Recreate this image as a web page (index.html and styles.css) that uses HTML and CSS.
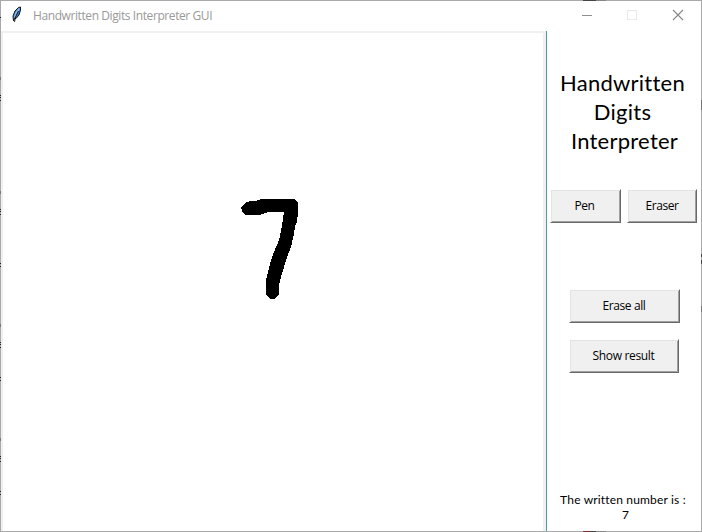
FILE: index.html
```html
<!DOCTYPE html>
<html lang="en">
<head>
<meta charset="utf-8">
<title>Handwritten Digits Interpreter GUI</title>
<link rel="stylesheet" href="styles.css">
</head>
<body>
<div class="window">
  <header class="titlebar">
    <svg class="feather" width="12" height="18" viewBox="0 0 12 18"><path d="M2.5 15L2 10L4 5L7.5 1.5L9.5 1L9.5 4L8 9L5 12.5L3.5 12.5Z" fill="#3d78b8" stroke="#111820" stroke-width="1"/><path d="M8.5 2.5L5 7L3.500 11.500" fill="none" stroke="#83bdf0" stroke-width="1.6"/><path d="M7.500 5L4.500 11L3.500 16" fill="none" stroke="#101010" stroke-width=".9"/></svg>
    <span class="caption">Handwritten Digits Interpreter GUI</span>
    <svg class="controls" width="102" height="12" viewBox="0 0 102 12" fill="none" shape-rendering="crispEdges"><path d="M0 6.5H10" stroke="#8f8f8f"/><path d="M45.500 1.500H54.500V10.500H45.500Z" stroke="#e8e8e8"/><path d="M91 1L101 11M101 1L91 11" stroke="#858585" stroke-width="1.1" shape-rendering="auto"/></svg>
  </header>
  <main class="content">
    <section class="canvas">
      <svg class="digit" width="60" height="104" viewBox="240 197 60 104" shape-rendering="crispEdges"><path d="M241 208L243 205L247 202L250 201H255L262 199H295L298 203V213L297 222L295 226L294 234L291 247L287 257L284 267L281 277L279 285V294L275 299H270L266 294V280L270 264L274 252L279 240L282 226L284 212H269L259 215H246L243 213Z"/></svg>
    </section>
    <aside class="panel">
      <h1 class="heading"><span class="h-a">Handwritten</span><span class="h-b">Digits</span><span class="h-c">Interpreter</span></h1>
      <div class="tools"><button class="btn pen">Pen</button><button class="btn eraser">Eraser</button></div>
      <div class="actions"><button class="btn erase-all">Erase all</button><button class="btn show">Show result</button></div>
      <p class="result"><span class="r-label">The written number is :</span><span class="r-value">7</span></p>
    </aside>
  </main>
  <svg class="edge" width="702" height="532" viewBox="0 0 702 532" fill="none" shape-rendering="crispEdges">
    <path stroke="#222" d="M.5 17v1M.5 95v1M.5 97v1M.5 100v1M.5 209v1M.5 211v1M.5 214v1M.5 263v1M.5 266v1M.5 342v1M.5 344v1M.5 347v1M.5 377v1M.5 380v1M.5 456v1M.5 458v1M.5 461v1M.5 491v1M.5 494v1"/>
    <path stroke="#777" d="M.5 77v3M.5 191v3M.5 324v3M.5 438v3M701.5 100v10M701.5 306v6"/>
    <path stroke="#444" d="M701.5 254v3M701.5 260v4M583 .5h13M590 531.500h6"/>
    <path stroke="#858585" d="M596 .5h10M596 531.500h10"/>
    <path stroke="#8c2a2a" d="M583 531.500h7"/>
  </svg>
</div>
</body>
</html>
```
FILE: styles.css
```css
* { box-sizing: border-box; }
body { margin: 0; background: #fff; color: #000; font: 12px/16px "Open Sans", "Noto Sans", sans-serif; overflow: hidden; }
.window { position: relative; width: 702px; height: 532px; border: 1px solid #a9a9a9; display: flex; flex-direction: column; }
.edge { position: absolute; top: -1px; left: -1px; pointer-events: none; }
.titlebar { height: 30px; flex: none; display: flex; align-items: center; padding: 0 17px 0 10px; }
.feather { margin-top: -2px; }
.caption { margin-left: 10px; color: #999; font-size: 12px; letter-spacing: -.41px; white-space: nowrap; }
.controls { margin-left: auto; margin-top: -2px; }
.content { flex: 1; display: flex; min-height: 0; }
.canvas { width: 545px; border: solid #f0f0f0; border-width: 2px 3px 0 2px; padding: 164px 0 0 237px; }
.digit { display: block; }
.panel { flex: 1; border-left: 1px solid #4e9c9c; display: flex; flex-direction: column; }
.heading { margin: 37px 0 0; font: 400 22px/29px Lato, sans-serif; font-variant-ligatures: none; letter-spacing: .25px; display: flex; flex-direction: column; align-items: center; height: 87px; padding-right: 3px; }
.heading span { white-space: nowrap; }
.h-c { padding-left: 4px; }
.tools { margin: 34px 0 0 3px; display: flex; gap: 6px; }
.btn { height: 34px; padding: 0; background: #f0f0f0; border: 1px solid; border-color: #fff #696969 #696969 #fff; box-shadow: inset 1px 1px #e3e3e3, inset -1px -1px #a0a0a0; font: 12px/16px "Open Sans", sans-serif; letter-spacing: -.4px; color: #000; }
.pen { width: 71px; padding-right: 2px; }
.eraser { width: 70px; }
.actions { margin: 66px 0 0 22px; display: flex; flex-direction: column; gap: 16px; }
.erase-all { width: 111px; padding-right: 1px; }
.show { width: 110px; letter-spacing: -.32px; padding-right: 1px; }
.result { margin: auto 2px 9px 0; font: 12px/15px Lato, sans-serif; letter-spacing: .17px; display: flex; flex-direction: column; align-items: center; }
.r-value { padding-left: 5px; }
```
